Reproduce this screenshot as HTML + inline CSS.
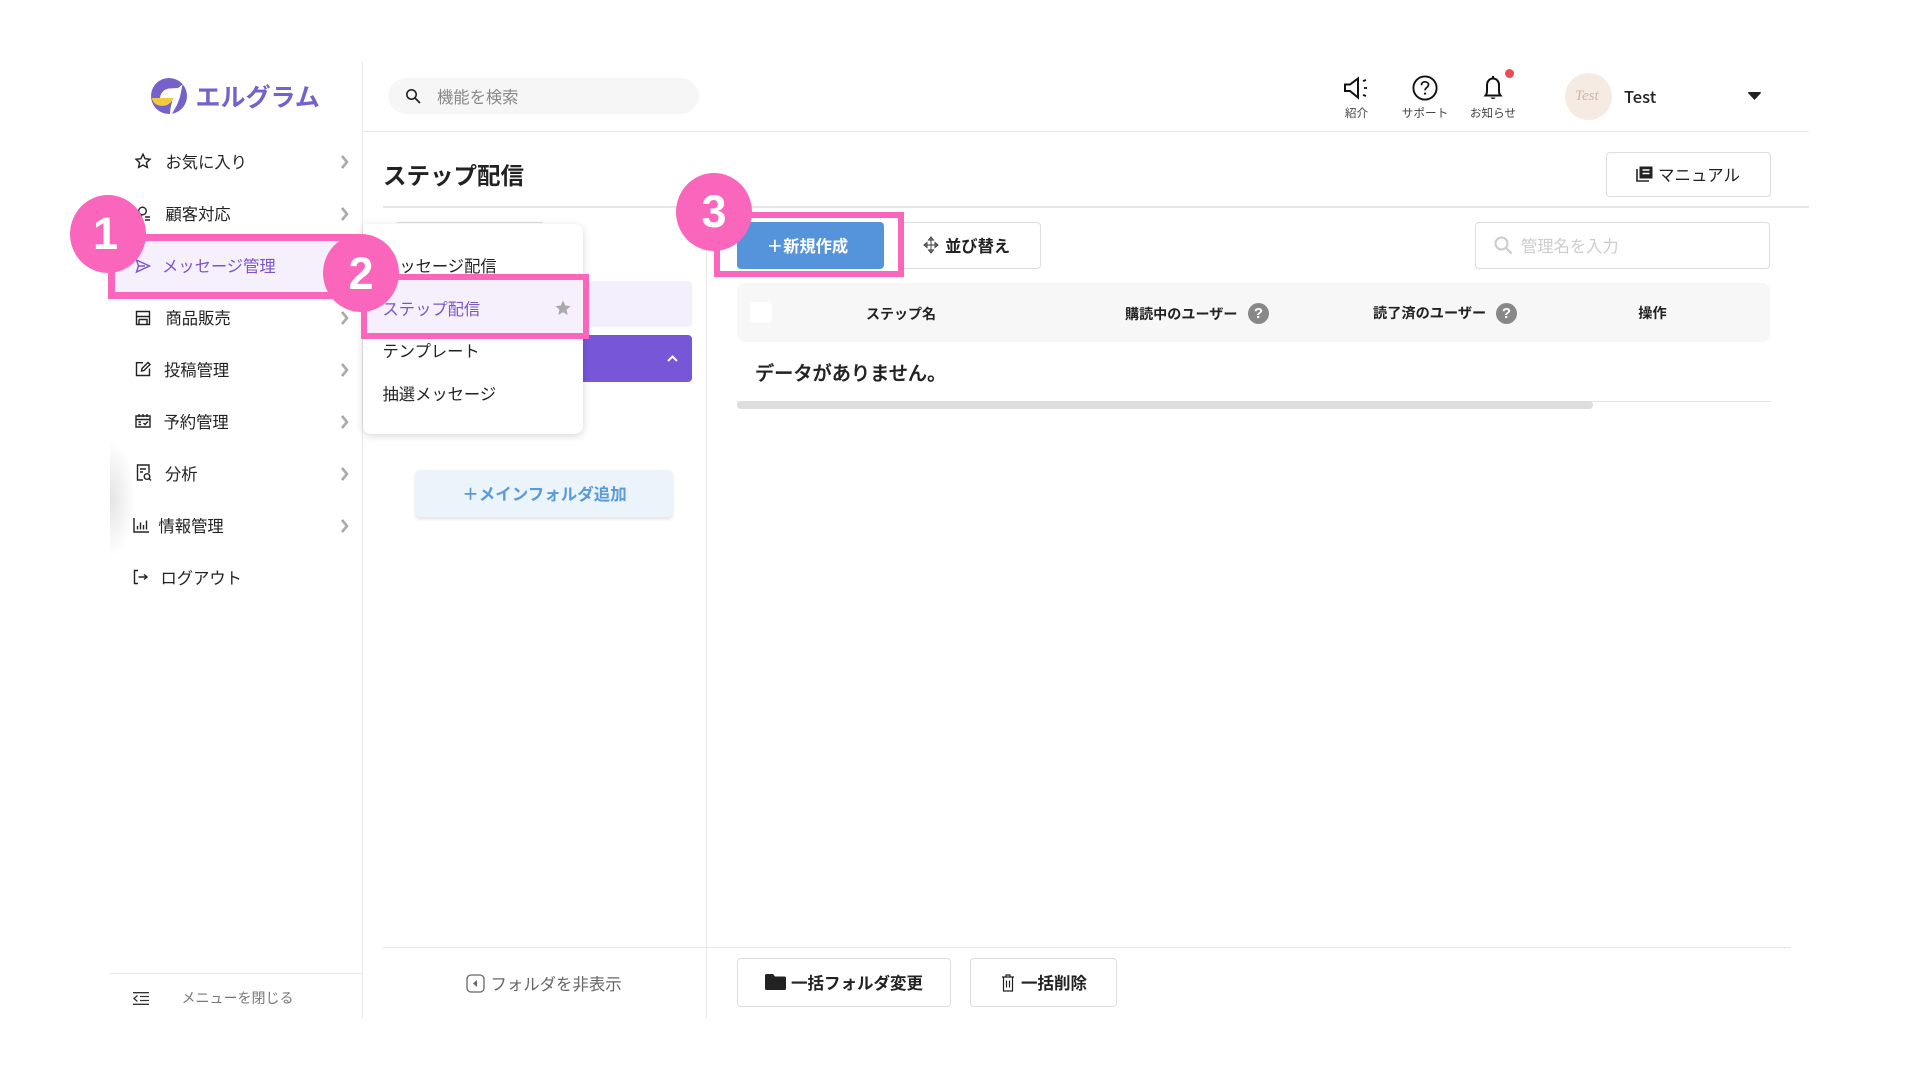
<!DOCTYPE html>
<html lang="ja">
<head>
<meta charset="utf-8">
<title>ステップ配信</title>
<style>
html,body{margin:0;padding:0;background:#fff}
body{width:1920px;height:1080px;position:relative;overflow:hidden;font-family:"Liberation Sans","Noto Sans CJK JP",sans-serif;color:#222}
.a{position:absolute;box-sizing:border-box}
.t{position:absolute;white-space:nowrap;line-height:24px;height:24px;font-size:16.3px}
.b{font-weight:700}
.c{text-align:center;transform:translateX(-50%)}
svg{position:absolute;overflow:visible}
.chev{fill:none;stroke:#aaa;stroke-width:2.6}
.ic{fill:none;stroke:#222;stroke-width:1.4}
.num{position:absolute;border-radius:50%;background:#fb66bd;color:#fff;font-family:"Liberation Sans",sans-serif;font-weight:700;font-size:45px;text-align:center;width:76px;height:78px;line-height:76px}
.num span{position:relative}
</style>
</head>
<body>
<!-- structure lines -->
<div class="a" style="left:362px;top:62px;width:1px;height:956px;background:#e8e8e8"></div>
<div class="a" style="left:363px;top:131px;width:1446px;height:1px;background:#e8e8e8"></div>
<div class="a" style="left:383px;top:206px;width:1426px;height:2px;background:#e6e6e6"></div>
<div class="a" style="left:706px;top:208px;width:1px;height:810px;background:#e8e8e8"></div>
<div class="a" style="left:383px;top:947px;width:1408px;height:1px;background:#e4e4e4"></div>
<div class="a" style="left:110px;top:973px;width:252px;height:1px;background:#e8e8e8"></div>
<div class="a" style="left:110px;top:430px;width:30px;height:138px;background:radial-gradient(ellipse 100% 50% at left center,#e4e4e4,#fff 85%)"></div>

<!-- logo -->
<svg style="left:151px;top:78px" width="36" height="36" viewBox="0 0 36 36">
<circle cx="18" cy="18" r="18" fill="#7560cc"/>
<path d="M9 20C9.500 15 13 11 18 10.500L27 10 31.500 6.500 29 19 26 27 20.500 36.500 19 36 19.500 30 22 20Z" fill="#fff"/>
<path d="M.8 20H22.500C20.500 26 14 29 8 27.500 4 26.500 1.800 24 .8 20Z" fill="#f3c93f"/>
</svg>
<div class="t b" style="left:195.500px;top:85.500px;font-size:25px;color:#7560cc">エルグラム</div>

<!-- search -->
<div class="a" style="left:388px;top:78px;width:311px;height:36px;border-radius:18px;background:#f6f6f6"></div>
<svg style="left:405px;top:88px" width="16" height="16" viewBox="0 0 16 16"><circle cx="6.500" cy="6.500" r="4.700" fill="none" stroke="#222" stroke-width="1.600"/><path d="M10 10l5 5" stroke="#222" stroke-width="1.800"/></svg>
<div class="t" style="left:437px;top:85.500px;color:#888">機能を検索</div>

<!-- top icons -->
<svg style="left:1343px;top:76px" width="28" height="24" viewBox="0 0 28 24"><path d="M2 8.500V15H7L15 21.500V2.500L7 8.500Z" fill="none" stroke="#111" stroke-width="2"/><path d="M20 5l3-1M21 12h3M20 19l3 1" stroke="#111" stroke-width="1.800"/></svg>
<div class="t c" style="left:1356.500px;top:102px;font-size:11.600px;color:#444">紹介</div>
<svg style="left:1412px;top:75px" width="26" height="26" viewBox="0 0 26 26"><circle cx="13" cy="13" r="11.600" fill="none" stroke="#111" stroke-width="1.900"/><path d="M9.500 10.200C9.500 8 11 6.800 13 6.800c2 0 3.500 1.200 3.500 3 0 2.600-3.500 2.800-3.500 5.600" fill="none" stroke="#111" stroke-width="1.700"/><circle cx="13" cy="18.600" r="1.100" fill="#111"/></svg>
<div class="t c" style="left:1425px;top:102px;font-size:11.600px;color:#444">サポート</div>
<svg style="left:1483px;top:75px" width="20" height="26" viewBox="0 0 20 26"><path d="M10 1v2.500M2.500 20.500h15c-1.500-1.800-1.500-3-1.500-5.500V10c0-3.500-2.500-6.500-6-6.500S4 6.500 4 10v5c0 2.500 0 3.700-1.500 5.500Z" fill="none" stroke="#111" stroke-width="2"/><path d="M7.500 22.500c.5 2 4.500 2 5 0Z" fill="#111"/></svg>
<div class="t c" style="left:1493px;top:102px;font-size:11.600px;color:#444">お知らせ</div>
<div class="a" style="left:1505px;top:69px;width:9px;height:9px;border-radius:50%;background:#ee4a50"></div>
<div class="a" style="left:1565px;top:73px;width:47px;height:47px;border-radius:50%;background:#f5ebe2"></div>
<div class="t" style="left:1575px;top:84px;font-family:'Liberation Serif',serif;font-style:italic;font-size:15px;color:#cdb6ae">Test</div>
<div class="t" style="left:1624px;top:84px;font-family:'Noto Sans CJK JP',sans-serif;font-size:16.500px;font-weight:500;color:#222">Test</div>
<svg style="left:1748px;top:92px" width="13" height="8" viewBox="0 0 13 8"><path d="M0 1Q0 0 1 0H12Q13 0 13 1L6.500 8Z" fill="#222"/></svg>

<!-- menu -->
<svg style="left:135px;top:153px" width="16" height="16" viewBox="0 0 16 16"><path d="M8 1.200l2.100 4.500 4.900.6-3.600 3.300 1 4.800L8 12l-4.400 2.400 1-4.800L1 6.300l4.900-.6Z" class="ic"/></svg>
<div class="t" style="left:165.500px;top:151px">お気に入り</div>
<svg style="left:135px;top:206px" width="16" height="16" viewBox="0 0 16 16"><circle cx="7.500" cy="5" r="3.800" class="ic"/><path d="M1 14.500C1.500 11 4 9.500 7 9.500M10 11H15M10 14H15" class="ic"/></svg>
<div class="t" style="left:165.500px;top:203px">顧客対応</div>
<div class="a" style="left:108px;top:234px;width:260px;height:65px;background:#f6f0fd;border:7px solid #fb66bd;border-right:0"></div>
<svg style="left:135px;top:258px" width="16" height="16" viewBox="0 0 16 16"><path d="M1.500 2L14.500 8 1.500 14 3.500 8ZM3.500 8H10" fill="none" stroke="#7a55c7" stroke-width="1.400"/></svg>
<div class="t" style="left:162px;top:255px;color:#7a55c7">メッセージ管理</div>
<svg style="left:135px;top:310px" width="16" height="16" viewBox="0 0 16 16"><path d="M1.500 1.500H14.500V14.500H1.500ZM1.500 6.500H14.500M4 9.500H12V14.500M4 9.500V14.500" class="ic"/></svg>
<div class="t" style="left:165.500px;top:307px">商品販売</div>
<svg style="left:135px;top:361px" width="16" height="16" viewBox="0 0 16 16"><path d="M8 1.700H1.500V14.500H14.500V7.500M6.500 10L7 7.500 13 1.500 15 3.500 9 9.500Z" class="ic"/></svg>
<div class="t" style="left:164px;top:359px">投稿管理</div>
<svg style="left:135px;top:413px" width="16" height="16" viewBox="0 0 16 16"><path d="M1 3H15V14H1ZM1 6.500H15M4 1V4M8 1V4M12 1V4M3.500 9H6M3.500 11.500H6M8.500 10L10 11.500 13 8.500" class="ic"/></svg>
<div class="t" style="left:163.500px;top:411px">予約管理</div>
<svg style="left:135.500px;top:464px" width="16" height="18" viewBox="0 0 16 18"><path d="M7 16H1.500V1H13V9M4 5H10M4 8H7" class="ic"/><circle cx="11" cy="12.500" r="2.800" class="ic"/><path d="M13 14.500L15 16.500" class="ic"/></svg>
<div class="t" style="left:165px;top:463px">分析</div>
<svg style="left:133px;top:517px" width="16" height="16" viewBox="0 0 16 16"><path d="M1 1V15H16M4.500 12.500V9M7.500 12.500V5.500M10.500 12.500V8M13.500 12.500V3.500" class="ic"/></svg>
<div class="t" style="left:158.500px;top:515px">情報管理</div>
<svg style="left:133px;top:569px" width="16" height="16" viewBox="0 0 16 16"><path d="M5 1.500H1.500V14.500H5M5.500 8H13.500M11 5.500L14 8 11 10.500" class="ic"/></svg>
<div class="t" style="left:160.500px;top:567px">ログアウト</div>
<svg style="left:341px;top:156px" width="7" height="170" viewBox="0 0 7 170"><path class="chev" d="M1 0l5 6-5 6M1 52l5 6-5 6M1 156l5 6-5 6"/></svg>
<svg style="left:341px;top:364px" width="7" height="170" viewBox="0 0 7 170"><path class="chev" d="M1 0l5 6-5 6M1 52l5 6-5 6M1 104l5 6-5 6M1 156l5 6-5 6"/></svg>

<!-- folder column (behind dropdown) -->
<div class="a" style="left:397px;top:222px;width:146px;height:6px;border-top:1px solid #ddd"></div>
<div class="a" style="left:400px;top:281px;width:292px;height:46px;background:#f3effc;border-radius:4px"></div>
<div class="a" style="left:400px;top:335px;width:292px;height:47px;background:#7856d8;border-radius:4px"></div>
<svg style="left:667px;top:355px" width="11" height="7" viewBox="0 0 11 7"><path d="M1 6l4.500-4.500L10 6" fill="none" stroke="#fff" stroke-width="2"/></svg>
<div class="a" style="left:415px;top:470px;width:258px;height:47px;background:#ebf3fb;border-radius:5px;box-shadow:0 2px 3px rgba(0,0,0,.12)"></div>
<div class="t b c" style="left:544.500px;top:483px;font-size:16.500px;color:#5b9bd5">＋メインフォルダ追加</div>

<!-- title -->
<div class="t b" style="left:383px;top:163.500px;font-size:23.500px">ステップ配信</div>

<!-- dropdown -->
<div class="a" style="left:363px;top:224px;width:220px;height:210px;background:#fff;border-radius:0 8px 8px 8px;box-shadow:0 2px 8px rgba(0,0,0,.16)"></div>
<div class="t" style="left:383px;top:255px">メッセージ配信</div>
<div class="a" style="left:361px;top:274px;width:228px;height:65px;background:#f6f0fd;border:6px solid #fb66bd"></div>
<div class="t" style="left:382.500px;top:297.500px;color:#7a55c7">ステップ配信</div>
<svg style="left:555px;top:300px" width="16" height="16" viewBox="0 0 16 16"><path d="M8 .5l2.300 5 5.200.6-3.900 3.600 1.100 5.300L8 12.300 3.300 15l1.100-5.300L.5 6.100l5.200-.6Z" fill="#aaa"/></svg>
<div class="t" style="left:382.500px;top:340px">テンプレート</div>
<div class="t" style="left:382.500px;top:382.500px">抽選メッセージ</div>

<!-- pink markers -->
<div class="num" style="left:70px;top:195px"><span style="left:-2.500px;top:1px">1</span></div>
<div class="num" style="left:323px;top:234px"><span style="top:2px">2</span></div>

<!-- main toolbar -->
<div class="a" style="left:895px;top:222px;width:146px;height:47px;border:1px solid #ddd;border-radius:4px;background:#fff"></div>
<div class="a" style="left:714px;top:212px;width:190px;height:65px;background:#fff;border:6px solid #fb66bd"></div>
<div class="a" style="left:737px;top:222px;width:147px;height:47px;background:#5594db;border-radius:4px"></div>
<div class="t b c" style="left:807.500px;top:234.500px;color:#fff">＋新規作成</div>
<svg style="left:923px;top:236px" width="16" height="18" viewBox="0 0 16 18"><path d="M8 1V17M1 9H15M8 1L5.500 4H10.500ZM8 17L5.500 14H10.500ZM1 9L4 6.500V11.500ZM15 9L12 6.500V11.500Z" fill="none" stroke="#333" stroke-width=".9"/></svg>
<div class="t b" style="left:945px;top:235px">並び替え</div>
<div class="num" style="left:676px;top:173px"><span style="top:1px">3</span></div>

<!-- manual -->
<div class="a" style="left:1605.500px;top:152px;width:165px;height:45px;border:1px solid #ddd;border-radius:4px"></div>
<svg style="left:1636px;top:166px" width="17" height="16" viewBox="0 0 17 16"><path d="M1 3V15H13" fill="none" stroke="#222" stroke-width="1.600"/><path d="M3.500 .5H16.500V12.500H3.500Z" fill="#222"/><path d="M6.500 4H13.500M6.500 7.500H13.500" stroke="#fff" stroke-width="1.400"/></svg>
<div class="t" style="left:1658px;top:163.500px;font-size:16.500px">マニュアル</div>

<!-- name search -->
<div class="a" style="left:1475px;top:222px;width:295px;height:47px;border:1px solid #ddd;border-radius:4px"></div>
<svg style="left:1494px;top:236px" width="18" height="18" viewBox="0 0 18 18"><circle cx="7.500" cy="7.500" r="6" fill="none" stroke="#ccc" stroke-width="2"/><path d="M12 12l5.500 5.500" stroke="#ccc" stroke-width="2.200"/></svg>
<div class="t" style="left:1521px;top:234.500px;color:#ccc">管理名を入力</div>

<!-- table -->
<div class="a" style="left:737px;top:283px;width:1033px;height:59px;background:#f7f7f7;border-radius:8px"></div>
<div class="a" style="left:750px;top:302px;width:22px;height:21px;background:#fff;border-radius:3px"></div>
<div class="t b c" style="left:901px;top:301.500px;font-size:14px">ステップ名</div>
<div class="t b" style="left:1125px;top:301.500px;font-size:14.100px">購読中のユーザー</div>
<div class="a" style="left:1248px;top:303px;width:21px;height:21px;border-radius:50%;background:#888;color:#fff;font-size:15px;font-weight:700;text-align:center;line-height:21px">?</div>
<div class="t b" style="left:1373px;top:301.500px;font-size:14.200px">読了済のユーザー</div>
<div class="a" style="left:1496px;top:303px;width:21px;height:21px;border-radius:50%;background:#888;color:#fff;font-size:15px;font-weight:700;text-align:center;line-height:21px">?</div>
<div class="t b c" style="left:1652.500px;top:301.500px;font-size:14.200px">操作</div>
<div class="t" style="left:755px;top:362.500px;font-size:19.200px;font-weight:500;color:#222;-webkit-text-stroke:.35px #222">データがありません。</div>
<div class="a" style="left:737px;top:401px;width:1034px;height:1px;background:#e5e5e5"></div>
<div class="a" style="left:737px;top:401px;width:856px;height:8px;background:#ddd;border-radius:4px"></div>

<!-- bottom -->
<svg style="left:133px;top:991.500px" width="16" height="13" viewBox="0 0 16 13"><path d="M0 .7H16M7 4.500H16M7 8.500H16M0 12.300H16M4.500 3.500L1 6.500 4.500 9.500" fill="none" stroke="#333" stroke-width="1.300"/></svg>
<div class="t" style="left:181.500px;top:985.500px;font-size:14px;color:#777">メニューを閉じる</div>
<svg style="left:466px;top:974px" width="19" height="19" viewBox="0 0 19 19"><rect x="1" y="1" width="17" height="17" rx="4" fill="none" stroke="#666" stroke-width="1.300"/><path d="M11 6v7L7 9.500Z" fill="#666"/></svg>
<div class="t" style="left:490.500px;top:972.500px;font-size:16.400px;color:#666">フォルダを非表示</div>
<div class="a" style="left:737px;top:958px;width:214px;height:49px;border:1px solid #ddd;border-radius:4px"></div>
<svg style="left:765px;top:974px" width="21" height="16" viewBox="0 0 21 16"><path d="M0 1.500Q0 0 1.500 0H8L10 2.500H19.500Q21 2.500 21 4V14.500Q21 16 19.500 16H1.500Q0 16 0 14.500Z" fill="#222"/></svg>
<div class="t b" style="left:791px;top:971.500px;font-size:16.500px">一括フォルダ変更</div>
<div class="a" style="left:970px;top:958px;width:147px;height:49px;border:1px solid #ddd;border-radius:4px"></div>
<svg style="left:1000.500px;top:974px" width="14" height="18" viewBox="0 0 14 18"><path d="M1 3H13M5 3V1H9V3M2.500 3V17H11.500V3M5.500 6.500V13.500M8.500 6.500V13.500" fill="none" stroke="#222" stroke-width="1.200"/></svg>
<div class="t b" style="left:1021px;top:971.500px;font-size:16.500px">一括削除</div>
</body>
</html>
